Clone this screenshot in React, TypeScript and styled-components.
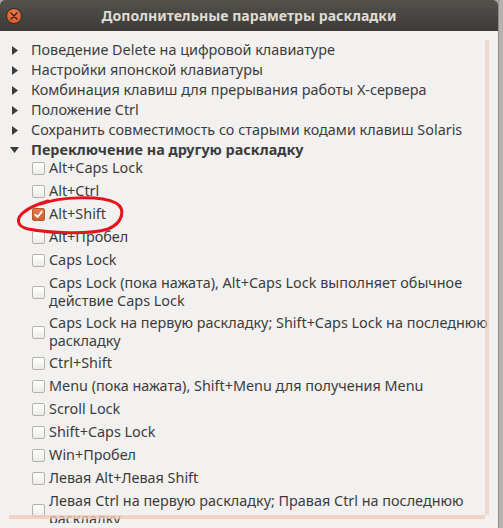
import React from "react";
import styled, { createGlobalStyle } from "styled-components";

const Global = createGlobalStyle`
  html, body { margin: 0; padding: 0; width: 503px; height: 528px; overflow: hidden; background: #a9a8a5; }
  #root { width: 503px; height: 528px; }
  * { box-sizing: border-box; }
`;

const Screen = styled.div`
  display: flex;
  width: 503px;
  height: 528px;
`;

const Window = styled.div`
  position: relative;
  width: 498px;
  height: 528px;
  display: flex;
  flex-direction: column;
  background: #f2f1f0;
  border-radius: 5px 5px 0 0;
  overflow: hidden;
  font-family: "Noto Sans", "Open Sans", sans-serif;
`;

const Strip = styled.div`
  flex: 1;
  background: #b3b2af;
  border-left: 1px solid #8e8d8a;
`;

const TitleBar = styled.div`
  height: 31px;
  flex: none;
  display: flex;
  align-items: center;
  justify-content: center;
  position: relative;
  background: linear-gradient(#52514c, #3c3b37);
  color: #dfdbd2;
  font-weight: 700;
  font-size: 14.1px;
`;

const CloseButton = styled.div`
  position: absolute;
  left: 6px;
  top: 8px;
  width: 16px;
  height: 16px;
  border-radius: 50%;
  background: radial-gradient(circle at 50% 35%, #f47d4d, #d9501f);
  border: 1px solid #2e2d2a;
  display: flex;
  align-items: center;
  justify-content: center;
`;

const Content = styled.div`
  height: 492px;
  flex: none;
  overflow: hidden;
  padding: 9px 0 0 0;
  color: #3c3c3c;
  font-size: 14.4px;
`;

const Row = styled.div`
  height: 20px;
  display: flex;
  align-items: center;
  white-space: nowrap;
`;

const Expander = styled.div`
  width: 31px;
  flex: none;
  display: flex;
  justify-content: center;
  padding-right: 2px;
`;

const Label = styled.span<{ $bold?: boolean }>`
  font-weight: ${(p) => (p.$bold ? 700 : 400)};
  line-height: 16px;
`;

const Children = styled.div`
  display: flex;
  flex-direction: column;
  margin-top: -3px;
`;

const OptionRow = styled.div<{ $multi?: boolean }>`
  display: flex;
  align-items: center;
  padding: ${(p) => (p.$multi ? "2px 0 2px 32px" : "2px 0 3px 32px")};
`;

const Box = styled.div<{ $checked?: boolean }>`
  width: 13px;
  height: 13px;
  flex: none;
  border-radius: 2px;
  border: 1px solid ${(p) => (p.$checked ? "#b5552c" : "#b4b2ae")};
  background: ${(p) =>
    p.$checked ? "linear-gradient(#e57a4a, #d05f2f)" : "linear-gradient(#ffffff, #ecebe9)"};
  display: flex;
  align-items: center;
  justify-content: center;
  margin-right: 4px;
`;

const Lines = styled.div`
  display: flex;
  flex-direction: column;
  white-space: nowrap;
  line-height: 18px;
`;

const VScroll = styled.div`
  position: absolute;
  left: 485px;
  top: 40px;
  width: 4px;
  height: 475px;
  background: rgba(240, 200, 180, 0.6);
`;

const HScroll = styled.div`
  position: absolute;
  left: 9px;
  top: 515px;
  width: 476px;
  height: 4px;
  background: rgba(240, 200, 180, 0.75);
`;

const Annotation = styled.svg`
  position: absolute;
  left: 0;
  top: 0;
  pointer-events: none;
`;

const RightTri = () => (
  <svg width="6" height="9" viewBox="0 0 6 9">
    <path d="M0 0 L6 4.5 L0 9 Z" fill="#3c3c3c" />
  </svg>
);

const DownTri = () => (
  <svg width="9" height="6" viewBox="0 0 9 6">
    <path d="M0 0 L9 0 L4.5 6 Z" fill="#3c3c3c" />
  </svg>
);

const Check = () => (
  <svg width="9" height="9" viewBox="0 0 9 9">
    <path d="M1.2 4.6 L3.6 7 L7.8 1.6" fill="none" stroke="#fff" strokeWidth="1.8" strokeLinecap="round" strokeLinejoin="round" />
  </svg>
);

const collapsed = [
  "Поведение Delete на цифровой клавиатуре",
  "Настройки японской клавиатуры",
  "Комбинация клавиш для прерывания работы X-сервера",
  "Положение Ctrl",
  "Сохранить совместимость со старыми кодами клавиш Solaris",
];

const options: { lines: string[]; checked?: boolean }[] = [
  { lines: ["Alt+Caps Lock"] },
  { lines: ["Alt+Ctrl"] },
  { lines: ["Alt+Shift"], checked: true },
  { lines: ["Alt+Пробел"] },
  { lines: ["Caps Lock"] },
  { lines: ["Caps Lock (пока нажата), Alt+Caps Lock выполняет обычное", "действие Caps Lock"] },
  { lines: ["Caps Lock на первую раскладку; Shift+Caps Lock на последнюю", "раскладку"] },
  { lines: ["Ctrl+Shift"] },
  { lines: ["Menu (пока нажата), Shift+Menu для получения Menu"] },
  { lines: ["Scroll Lock"] },
  { lines: ["Shift+Caps Lock"] },
  { lines: ["Win+Пробел"] },
  { lines: ["Левая Alt+Левая Shift"] },
  { lines: ["Левая Ctrl на первую раскладку; Правая Ctrl на последнюю", "раскладку"] },
];

export default function App() {
  return (
    <>
      <Global />
      <Screen>
        <Window>
          <TitleBar>
            <CloseButton>
              <svg width="8" height="8" viewBox="0 0 8 8">
                <path d="M1 1 L7 7 M7 1 L1 7" stroke="#3a2a22" strokeWidth="1.6" strokeLinecap="round" />
              </svg>
            </CloseButton>
            Дополнительные параметры раскладки
          </TitleBar>
          <Content>
            {collapsed.map((t) => (
              <Row key={t}>
                <Expander>
                  <RightTri />
                </Expander>
                <Label>{t}</Label>
              </Row>
            ))}
            <Row>
              <Expander>
                <DownTri />
              </Expander>
              <Label $bold>Переключение на другую раскладку</Label>
            </Row>
            <Children>
              {options.map((o) => (
                <OptionRow key={o.lines.join(" ")} $multi={o.lines.length > 1}>
                  <Box $checked={o.checked}>{o.checked && <Check />}</Box>
                  <Lines>
                    {o.lines.map((l) => (
                      <span key={l}>{l}</span>
                    ))}
                  </Lines>
                </OptionRow>
              ))}
            </Children>
          </Content>
          <VScroll />
          <HScroll />
          <Annotation width="498" height="528" viewBox="0 0 498 528">
            <path
              d="M40 204 C60 197 100 195 116 203 C126 209 123 223 108 229 C88 235 50 233 28 229 C16 226 16 218 24 212 C30 207 38 204 48 201"
              fill="none"
              stroke="#e8121a"
              strokeWidth="3"
              strokeLinecap="round"
            />
          </Annotation>
        </Window>
        <Strip />
      </Screen>
    </>
  );
}
